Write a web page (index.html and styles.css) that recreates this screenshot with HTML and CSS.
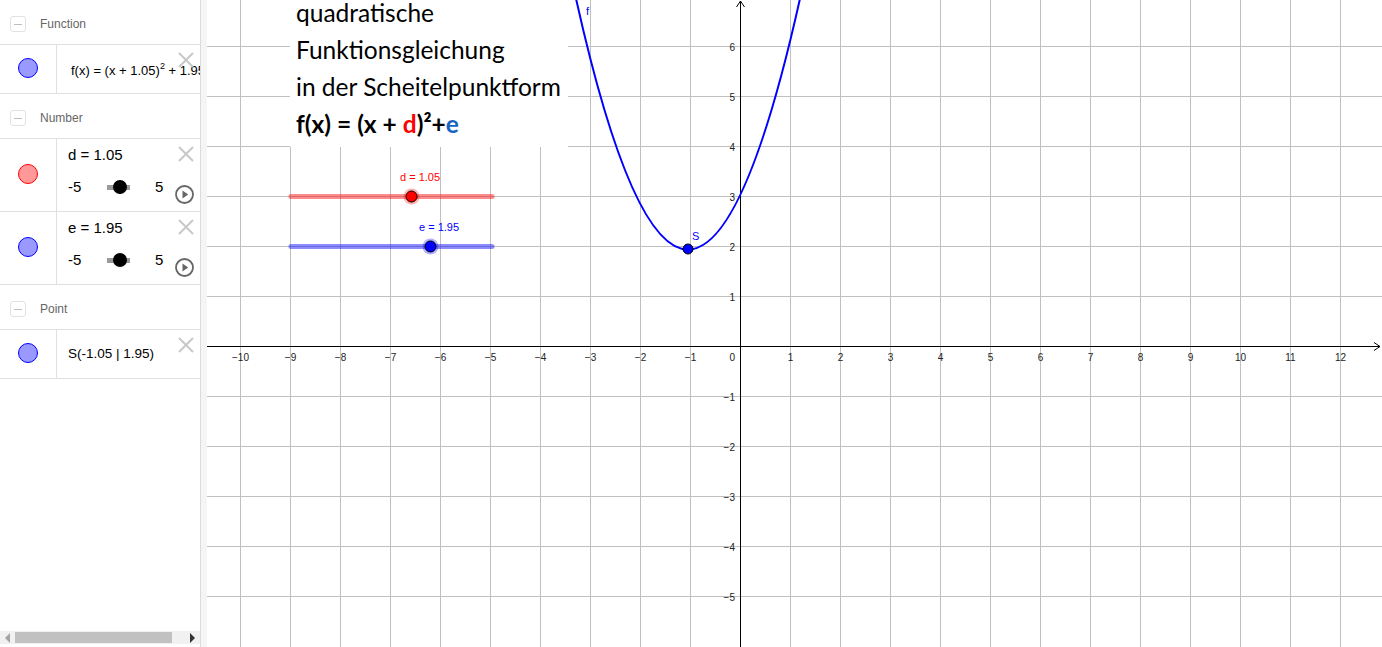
FILE: index.html
```html
<!DOCTYPE html>
<html lang="de">
<head>
<meta charset="utf-8">
<title>Scheitelpunktform</title>
<link rel="stylesheet" href="styles.css">
</head>
<body>
<div class="app">
  <aside class="algebra">
    <div class="items">
      <div class="group-header"><span class="toggle"><span class="toggle-bar"></span></span><span class="group-title">Function</span></div>
      <div class="item item-short">
        <div class="marble-cell"><span class="marble marble-blue"></span></div>
        <div class="item-content"><span class="formula">f(x) = (x + 1.05)<sup>2</sup> + 1.95</span></div>
        <svg class="close" viewBox="0 0 16 16"><path d="M1 1L15 15M15 1L1 15"/></svg>
      </div>

      <div class="group-header"><span class="toggle"><span class="toggle-bar"></span></span><span class="group-title">Number</span></div>
      <div class="item item-slider">
        <div class="marble-cell"><span class="marble marble-red"></span></div>
        <div class="item-content slider-content">
          <div class="value">d = 1.05</div>
          <div class="mini-slider">
            <span class="bound">-5</span>
            <span class="track"><span class="knob" style="left: 13px"></span></span>
            <span class="bound bound-max">5</span>
          </div>
        </div>
        <svg class="close" viewBox="0 0 16 16"><path d="M1 1L15 15M15 1L1 15"/></svg>
        <svg class="play" viewBox="0 0 19 19"><circle cx="9.5" cy="9.5" r="8.5"/><path d="M7.5 5.5L13.2 9.5L7.5 13.5Z"/></svg>
      </div>
      <div class="item item-slider">
        <div class="marble-cell"><span class="marble marble-blue"></span></div>
        <div class="item-content slider-content">
          <div class="value">e = 1.95</div>
          <div class="mini-slider">
            <span class="bound">-5</span>
            <span class="track"><span class="knob" style="left: 13px"></span></span>
            <span class="bound bound-max">5</span>
          </div>
        </div>
        <svg class="close" viewBox="0 0 16 16"><path d="M1 1L15 15M15 1L1 15"/></svg>
        <svg class="play" viewBox="0 0 19 19"><circle cx="9.5" cy="9.5" r="8.5"/><path d="M7.5 5.5L13.2 9.5L7.5 13.5Z"/></svg>
      </div>

      <div class="group-header"><span class="toggle"><span class="toggle-bar"></span></span><span class="group-title">Point</span></div>
      <div class="item item-short">
        <div class="marble-cell"><span class="marble marble-blue"></span></div>
        <div class="item-content"><span class="point-text">S(-1.05 | 1.95)</span></div>
        <svg class="close" viewBox="0 0 16 16"><path d="M1 1L15 15M15 1L1 15"/></svg>
      </div>
    </div>
    <div class="hscroll">
      <span class="arrow-left"></span>
      <span class="thumb"></span>
      <span class="arrow-right"></span>
    </div>
  </aside>
  <div class="splitter"></div>
  <main class="graphics">
    <svg class="canvas" width="1175" height="647" viewBox="207 0 1175 647">
      <g class="grid">
        <path d="M240.5 0V647M290.5 0V647M340.5 0V647M390.5 0V647M440.5 0V647M490.5 0V647M540.5 0V647M590.5 0V647M640.5 0V647M690.5 0V647M790.5 0V647M840.5 0V647M890.5 0V647M940.5 0V647M990.5 0V647M1040.5 0V647M1090.5 0V647M1140.5 0V647M1190.5 0V647M1240.5 0V647M1290.5 0V647M1340.5 0V647"/>
        <path d="M207 46.5H1382M207 96.5H1382M207 146.5H1382M207 196.5H1382M207 246.5H1382M207 296.5H1382M207 396.5H1382M207 446.5H1382M207 496.5H1382M207 546.5H1382M207 596.5H1382"/>
      </g>
      <g class="axes">
        <path d="M207 346.5H1380M740.5 647V1"/>
        <path d="M1374 342.5L1380 346.5L1374 350.5M736.5 7L740.5 1L744.5 7"/>
      </g>
      <g class="xlabels">
        <text x="240.5" y="361">−10</text>
        <text x="290.5" y="361">−9</text>
        <text x="340.5" y="361">−8</text>
        <text x="390.5" y="361">−7</text>
        <text x="440.5" y="361">−6</text>
        <text x="490.5" y="361">−5</text>
        <text x="540.5" y="361">−4</text>
        <text x="590.5" y="361">−3</text>
        <text x="640.5" y="361">−2</text>
        <text x="690.5" y="361">−1</text>
        <text x="790.5" y="361">1</text>
        <text x="840.5" y="361">2</text>
        <text x="890.5" y="361">3</text>
        <text x="940.5" y="361">4</text>
        <text x="990.5" y="361">5</text>
        <text x="1040.5" y="361">6</text>
        <text x="1090.5" y="361">7</text>
        <text x="1140.5" y="361">8</text>
        <text x="1190.5" y="361">9</text>
        <text x="1240.5" y="361">10</text>
        <text x="1290.5" y="361">11</text>
        <text x="1340.5" y="361">12</text>
      </g>
      <g class="ylabels">
        <text x="735" y="361">0</text>
        <text x="735" y="51">6</text>
        <text x="735" y="101">5</text>
        <text x="735" y="151">4</text>
        <text x="735" y="201">3</text>
        <text x="735" y="251">2</text>
        <text x="735" y="301">1</text>
        <text x="735" y="401">−1</text>
        <text x="735" y="451">−2</text>
        <text x="735" y="501">−3</text>
        <text x="735" y="551">−4</text>
        <text x="735" y="601">−5</text>
      </g>
      <path class="curve" d="M575.08 -5.5Q688 504.5 800.92 -5.5"/>
      <text class="obj-label blue" x="586" y="15">f</text>
      <circle class="point" cx="688" cy="249" r="5"/>
      <text class="obj-label blue" x="692" y="240">S</text>

      <line class="slider-line slider-red" x1="291" y1="196.5" x2="492" y2="196.5"/>
      <circle class="halo halo-red" cx="411.5" cy="196.5" r="8"/>
      <circle class="slider-knob knob-red" cx="411.5" cy="196.5" r="5.5"/>
      <text class="slider-label red" x="400" y="181">d = 1.05</text>

      <line class="slider-line slider-blue" x1="291" y1="246.5" x2="492" y2="246.5"/>
      <circle class="halo halo-blue" cx="430.5" cy="246.5" r="8"/>
      <circle class="slider-knob knob-blue" cx="430.5" cy="246.5" r="5.5"/>
      <text class="slider-label blue" x="419" y="231">e = 1.95</text>
    </svg>
    <div class="textbox">
      <div class="tline">quadratische</div>
      <div class="tline">Funktionsgleichung</div>
      <div class="tline">in der Scheitelpunktform</div>
      <div class="tline eq">f(x) = (x + <span class="var-d">d</span>)²+<span class="var-e">e</span></div>
    </div>
  </main>
</div>
</body>
</html>
```

FILE: styles.css
```css
* { box-sizing: border-box; }
html, body { margin: 0; padding: 0; }
body {
  width: 1382px;
  height: 647px;
  overflow: hidden;
  background: #fff;
  font-family: "Liberation Sans", Arial, sans-serif;
}
.app {
  display: flex;
  width: 1382px;
  height: 647px;
}

/* ---------- algebra view ---------- */
.algebra {
  width: 200px;
  flex: 0 0 200px;
  height: 647px;
  display: flex;
  flex-direction: column;
  background: #fff;
  overflow: hidden;
}
.items { flex: 1; }
.group-header {
  height: 45px;
  border-bottom: 1px solid #e0e0e0;
  display: flex;
  align-items: center;
  padding-left: 10px;
  padding-top: 4px;
}
.toggle {
  width: 16px;
  height: 16px;
  border: 1px solid #e2e2e2;
  border-radius: 3px;
  display: flex;
  align-items: center;
  justify-content: center;
}
.toggle-bar {
  width: 8px;
  height: 1px;
  background: #bdbdbd;
}
.group-title {
  margin-left: 14px;
  font-size: 12px;
  color: #666;
}
.item {
  position: relative;
  display: flex;
  border-bottom: 1px solid #e0e0e0;
}
.item-short { height: 49px; }
.item-slider { height: 73px; }
.marble-cell {
  width: 57px;
  flex: 0 0 57px;
  border-right: 1px solid #e0e0e0;
  display: flex;
  align-items: center;
  justify-content: center;
  padding-bottom: 3px;
}
.marble {
  width: 20px;
  height: 20px;
  border-radius: 50%;
  margin-right: 1px;
}
.marble-blue { background: #9999ff; border: 1px solid #0000ff; }
.marble-red { background: #ff9999; border: 1px solid #ff0000; }
.item-content {
  flex: 1;
  display: flex;
  align-items: center;
  padding-left: 11px;
  white-space: nowrap;
  overflow: hidden;
  color: #000;
}
.formula {
  font-size: 13px;
  padding-left: 3px;
  margin-top: 3px;
}
.formula sup {
  font-size: 9px;
  vertical-align: 6px;
  line-height: 0;
}
.point-text {
  font-size: 13.5px;
  margin-top: -2px;
}
.slider-content {
  flex-direction: column;
  align-items: flex-start;
  justify-content: flex-start;
  padding-top: 6px;
}
.value {
  font-size: 15px;
  line-height: 20px;
}
.mini-slider {
  display: flex;
  align-items: center;
  margin-top: 12px;
  font-size: 15px;
  line-height: 20px;
}
.bound { width: 39px; }
.bound-max { width: auto; }
.track {
  position: relative;
  width: 23px;
  height: 5px;
  background: #9a9a9a;
  margin-right: 25px;
}
.knob {
  position: absolute;
  top: -5px;
  width: 14px;
  height: 14px;
  margin-left: -7px;
  border-radius: 50%;
  background: #000;
}
.close {
  position: absolute;
  top: 7px;
  right: 6px;
  width: 16px;
  height: 16px;
  fill: none;
  stroke: #c8c8c8;
  stroke-width: 2;
}
.play {
  position: absolute;
  top: 46px;
  right: 6px;
  width: 19px;
  height: 19px;
}
.play circle { fill: #fff; stroke: #666; stroke-width: 1.8; }
.play path { fill: #666; }

.hscroll {
  height: 13px;
  margin-bottom: 3px;
  background: #f1f1f1;
  display: flex;
  align-items: center;
  padding: 0 5px;
}
.arrow-left {
  width: 0; height: 0;
  border-top: 5px solid transparent;
  border-bottom: 5px solid transparent;
  border-right: 5px solid #a3a3a3;
}
.thumb {
  height: 11px;
  width: 157px;
  margin-left: 5px;
  background: #c1c1c1;
}
.arrow-right {
  width: 0; height: 0;
  margin-left: auto;
  border-top: 5px solid transparent;
  border-bottom: 5px solid transparent;
  border-left: 5px solid #333;
}

.splitter {
  width: 7px;
  flex: 0 0 7px;
  background: #f5f5f5;
  border-left: 1px solid #dcdcdc;
}

/* ---------- graphics view ---------- */
.graphics {
  position: relative;
  flex: 1;
  height: 647px;
  overflow: hidden;
}
.canvas { display: block; }
.grid path { stroke: #c0c0c0; stroke-width: 1; fill: none; }
.axes path { stroke: #000; stroke-width: 1; fill: none; }
.xlabels text, .ylabels text {
  font-family: "Liberation Sans", Arial, sans-serif;
  font-size: 10px;
  fill: #222;
}
.xlabels text { text-anchor: middle; }
.ylabels text { text-anchor: end; }
.curve { fill: none; stroke: #0000ff; stroke-width: 2; }
.point { fill: #0000ff; stroke: #000; stroke-width: 1; }
.obj-label {
  font-family: "Liberation Sans", Arial, sans-serif;
  font-size: 11px;
}
.blue { fill: #0000ff; }
.red { fill: #ff0000; }
.slider-line { stroke-width: 5; stroke-linecap: round; }
.slider-red { stroke: rgba(255, 0, 0, 0.45); }
.slider-blue { stroke: rgba(0, 0, 255, 0.45); }
.halo-red { fill: rgba(255, 0, 0, 0.3); }
.halo-blue { fill: rgba(0, 0, 255, 0.3); }
.knob-red { fill: #ff0000; stroke: #000; stroke-width: 1; }
.knob-blue { fill: #0000ff; stroke: #000; stroke-width: 1; }
.slider-label {
  font-family: "Liberation Sans", Arial, sans-serif;
  font-size: 11px;
}

.textbox {
  position: absolute;
  left: 83px;
  top: 0;
  width: 278px;
  height: 147px;
  background: #fff;
  padding-left: 6px;
  padding-top: 2px;
  display: flex;
  flex-direction: column;
  gap: 16px;
  font-family: Lato, "Open Sans", sans-serif;
  font-size: 24.5px;
  color: #000;
}
.tline {
  line-height: 21px;
  white-space: nowrap;
}
.eq { font-weight: bold; }
.var-d { color: #ff0000; }
.var-e { color: #1565c0; }
```
